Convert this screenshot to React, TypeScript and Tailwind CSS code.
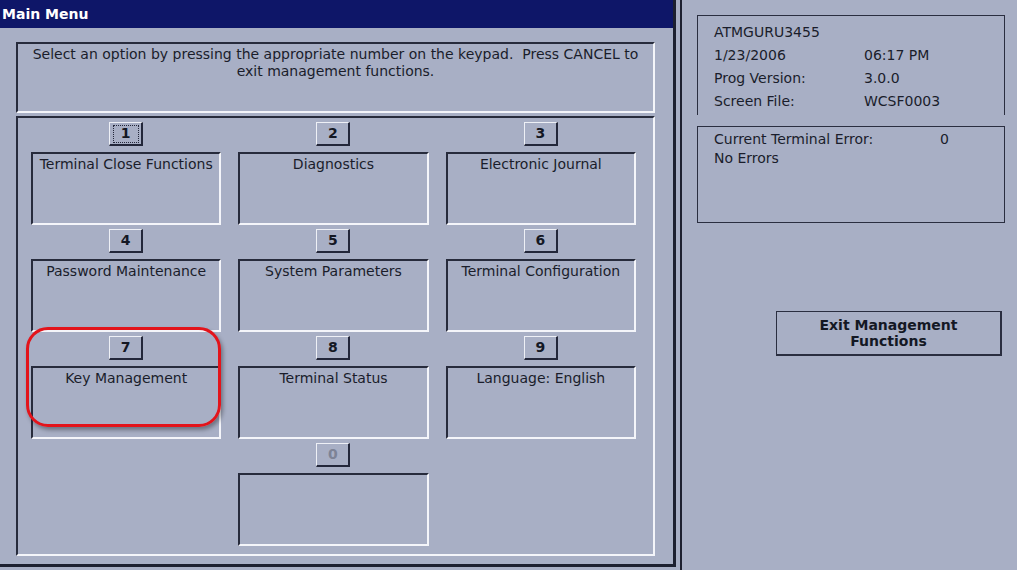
import React from "react";

const font = { fontFamily: '"DejaVu Sans", "Liberation Sans", sans-serif' };

function Cell({ n, label, focused, disabled }: { n: string; label: string; focused?: boolean; disabled?: boolean }) {
  return (
    <div className="flex flex-col items-center">
      <div
        className={
          "h-[24px] w-[34px] flex items-center justify-center border-t border-l border-t-[#eef0f6] border-l-[#eef0f6] border-b-2 border-r-2 border-b-[#23273a] border-r-[#23273a] text-[14px] font-bold " +
          (disabled ? "text-[#7d8396]" : "text-[#141824]")
        }
      >
        {focused ? (
          <div className="h-[18px] w-[26px] border border-dotted border-[#23273a] flex items-center justify-center">{n}</div>
        ) : (
          n
        )}
      </div>
      <div className="mt-[6px] h-[73px] w-full border-t-2 border-l-2 border-t-[#272b3c] border-l-[#272b3c] border-b-2 border-r-2 border-b-[#f4f5fa] border-r-[#f4f5fa] text-center text-[14px] leading-[18px] text-[#1a1d2b] pt-[1px]">
        {label}
      </div>
    </div>
  );
}

export default function App() {
  return (
    <div className="w-[1017px] h-[570px] bg-[#a8afc5] flex overflow-hidden" style={font}>
      <div className="relative w-[676px] h-[567px] flex flex-col border-r-[3px] border-b-[3px] border-[#1d2030]">
        <div className="h-[28px] bg-[#0e1668] flex items-center pl-[2px] text-white font-bold text-[14px]">Main Menu</div>
        <div className="flex flex-col pl-[16px] pr-[18px] pt-[14px]">
          <div className="h-[71px] border-t-2 border-l-2 border-t-[#272b3c] border-l-[#272b3c] border-b-2 border-r-2 border-b-[#f4f5fa] border-r-[#f4f5fa] text-center text-[14px] leading-[17px] text-[#1a1d2b] pt-[2px]">
            Select an option by pressing the appropriate number on the keypad.&nbsp; Press CANCEL to
            <br />
            exit management functions.
          </div>
          <div className="mt-[3px] h-[440px] border-t-2 border-l-2 border-t-[#272b3c] border-l-[#272b3c] border-b-2 border-r-2 border-b-[#f4f5fa] border-r-[#f4f5fa] pl-[13px] pr-[17px] pt-[4px] grid grid-cols-3 gap-x-[17px] gap-y-[4px] content-start">
            <Cell n="1" label="Terminal Close Functions" focused />
            <Cell n="2" label="Diagnostics" />
            <Cell n="3" label="Electronic Journal" />
            <Cell n="4" label="Password Maintenance" />
            <Cell n="5" label="System Parameters" />
            <Cell n="6" label="Terminal Configuration" />
            <Cell n="7" label="Key Management" />
            <Cell n="8" label="Terminal Status" />
            <Cell n="9" label="Language: English" />
            <div />
            <Cell n="0" label="" disabled />
            <div />
          </div>
        </div>
        <div className="absolute left-[26px] top-[327px] w-[195px] h-[100px] border-[3px] border-[#e3141b] rounded-[22px] shadow-[2px_3px_4px_rgba(0,0,0,0.35)]" />
      </div>
      <div className="ml-[4px] flex-1 h-[570px] border-l-2 border-[#1d2030] pl-[15px] pr-[12px] pt-[15px] flex flex-col text-[14px] text-[#1a1d2b]">
        <div className="h-[100px] border-t border-l border-r border-[#2a2e40] pl-[16px] pt-[5px] leading-[23px]">
          <div>ATMGURU3455</div>
          <div className="flex"><span className="w-[150px]">1/23/2006</span><span>06:17 PM</span></div>
          <div className="flex"><span className="w-[150px]">Prog Version:</span><span>3.0.0</span></div>
          <div className="flex"><span className="w-[150px]">Screen File:</span><span>WCSF0003</span></div>
        </div>
        <div className="mt-[11px] h-[97px] border border-[#2a2e40] pl-[16px] pt-[3px] leading-[19px]">
          <div className="flex"><span className="w-[226px]">Current Terminal Error:</span><span>0</span></div>
          <div>No Errors</div>
        </div>
        <div className="mt-[88px] ml-[79px] w-[226px] h-[45px] border border-[#2a2e40] border-b-2 border-r-2 flex flex-col items-center justify-center text-[14px] font-bold leading-[16px] text-[#141824]">
          <div>Exit Management</div>
          <div>Functions</div>
        </div>
      </div>
    </div>
  );
}
